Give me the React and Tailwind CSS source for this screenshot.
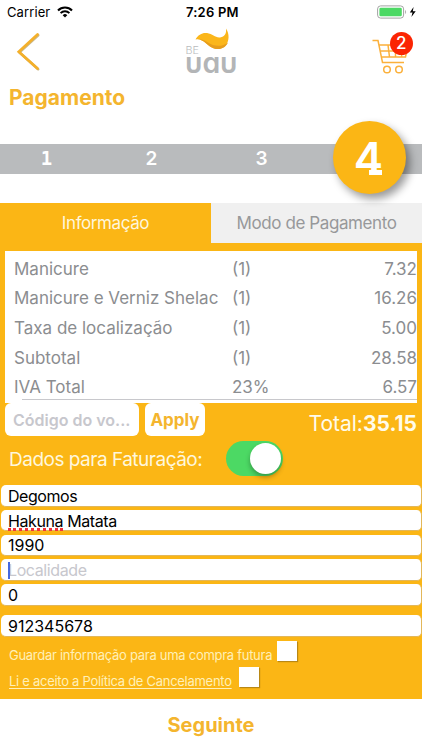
const items = [
  { name: 'Manicure', qty: '(1)', price: '7.32' },
  { name: 'Manicure e Verniz Shelac', qty: '(1)', price: '16.26' },
  { name: 'Taxa de localização', qty: '(1)', price: '5.00' },
  { name: 'Subtotal', qty: '(1)', price: '28.58' },
  { name: 'IVA Total', qty: '23%', price: '6.57' },
];

function StatusBar() {
  return (
    <div className="relative flex h-6 items-center justify-between pl-[7px] pr-[6px] text-[13px] text-black">
      <div className="flex items-center gap-[7px]">
        <span className="mt-px tracking-[0.1px]">Carrier</span>
        <svg className="h-[12px] w-[16px]" viewBox="0 0 16 12" fill="none" stroke="black">
          <path d="M1 4.4a10 10 0 0 1 14 0" strokeWidth="2.1" />
          <path d="M3.6 7.1a6.2 6.2 0 0 1 8.8 0" strokeWidth="2" />
          <path d="M8 11.6 5.7 9.2a3.3 3.3 0 0 1 4.6 0Z" fill="black" stroke="none" />
        </svg>
      </div>
      <span className="absolute left-[186px] mt-px tracking-[0.2px] font-semibold">7:26 PM</span>
      <svg className="h-[14px] w-[39px]" viewBox="0 0 39 14">
        <rect x="0.6" y="0.9" width="26" height="12.2" rx="3" fill="white" stroke="#a3a3a3" strokeWidth="1" />
        <rect x="2.4" y="2.7" width="22.4" height="8.6" rx="1.4" fill="#4cd964" />
        <path d="M28.2 5v4c1.2-.4 1.2-3.6 0-4Z" fill="#a3a3a3" />
        <path d="M36.6 2 32.8 7.6h2.7L34.4 12l4.3-5.8h-2.9Z" fill="black" />
      </svg>
    </div>
  );
}

function Logo() {
  return (
    <div className="relative h-[50px] w-[56px]">
      <svg className="h-[50px] w-[56px] overflow-visible" viewBox="0 0 56 50">
        <path d="M9.5 12.5C12 7.500 17 5.300 21 6.100c6 1.200 9 5.400 14 4.100 4.500-1.200 5.500-4.700 5-8.700 3.500 5 3.500 12.500-.5 17-4 4.300-10.500 4.500-15.500 1C19 15.500 15 11 9.500 12.500Z" fill="#fbb61a" />
        <path d="M9.500 12.500c5.500-.8 8.500.5 12 2.700 6 4 14 5.500 20.500.3-3 7-11.500 8.500-18 4C19 15.500 15 11 9.500 12.500Z" fill="#e79d1c" />
        <text x="-0.500" y="27" fontSize="10" fontWeight="300" fill="#b9bbbd" textLength="13.500" lengthAdjust="spacingAndGlyphs">BE</text>
      </svg>
      <span className="absolute left-[-1.500px] top-[24px] origin-left scale-x-[0.98] text-[29px] font-semibold leading-[24px] text-[#b3b5b7] [font-feature-settings:'cv11','cv06']">
        uau
      </span>
    </div>
  );
}

function Cart() {
  return (
    <div className="relative h-[36px] w-[42px]">
      <svg className="h-[36px] w-[42px]" viewBox="0 0 42 36" fill="none" stroke="#fbb03b" strokeWidth="1.500">
        <path d="M0.500 2.500H6l4.500 22h21.500M7 7h29l-2.500 12H9.500M8.500 13h26M16 7l1.500 12M23.500 7v12M30.500 7 29.500 19" />
        <circle cx="15" cy="31.500" r="3.300" />
        <circle cx="27" cy="31.500" r="3.300" />
      </svg>
      <span className="absolute left-[18px] top-[-6px] flex h-[22.500px] w-[22.500px] items-center justify-center rounded-full bg-[#fb2503] text-[17px] font-medium text-white">
        2
      </span>
    </div>
  );
}

function Field({ className = '', children }) {
  return (
    <div className={`flex h-[21.5px] items-center rounded-[5px] border-b border-r border-[#e2b75a] bg-white pl-[7px] pt-px text-[16px] leading-none ${className}`}>
      {children}
    </div>
  );
}

export default function App() {
  return (
    <div className="flex h-[750px] w-[422px] flex-col overflow-hidden bg-white font-[Inter,sans-serif]">
      <StatusBar />

      {/* Header */}
      <div className="flex h-[119.5px] flex-col">
        <div className="flex items-start justify-between pl-[16px] pr-[8px]">
          <svg className="mt-[8px] h-[40px] w-[26px]" viewBox="0 0 26 40" fill="none" strokeLinecap="round">
            <path d="M21.500 2.500 2.800 19.700 21.500 36.500" stroke="#c9b78a" strokeWidth="2.600" transform="translate(0.700 0.700)" />
            <path d="M21.500 2.500 2.800 19.700 21.500 36.500" stroke="#f4b02a" strokeWidth="2.700" />
          </svg>
          <div className="ml-[14px] mt-[3px] w-[56px]">
            <Logo />
          </div>
          <div className="mt-[14px]">
            <Cart />
          </div>
        </div>
        <h1 className="ml-[9px] mt-[8px] text-[21px] font-bold leading-[26px] text-[#f4b52e]">Pagamento</h1>
      </div>

      {/* Steps */}
      <div className="relative h-[59px]">
        <div className="grid h-[30px] grid-cols-[93px_117px_103px_109px] items-center bg-[#b9bbbd] text-center text-[19px] font-semibold leading-none text-white">
          <span className="font-['DejaVu_Sans_Mono',monospace] font-bold">1</span>
          <span>2</span>
          <span>3</span>
        </div>
        <div className="absolute left-[333px] top-[-22.500px] flex h-[73px] w-[73px] items-center justify-center rounded-full bg-[#fbb615] text-[44px] font-semibold leading-none text-white shadow-[4px_5px_8px_rgba(0,0,0,0.4)]">
          <span className="relative -left-[1px]">
            4
            {/* slab under the stem */}
            <span className="absolute bottom-[5px] right-[1px] h-[5px] w-[13px] bg-white"></span>
          </span>
        </div>
      </div>

      <div className="flex h-[496px] flex-col bg-[#fbb615]">
        {/* Tabs */}
        <div className="grid h-[39.5px] shrink-0 grid-cols-2 text-center text-[17px] leading-[40px] tracking-[-0.4px]">
          <div className="text-[#fff7dc]">Informação</div>
          <div className="bg-[#f0f0f0] text-[#97989a]">Modo de Pagamento</div>
        </div>

        {/* Items */}
        <div className="mx-[5px] mt-[8.500px] h-[152px] shrink-0 bg-white pt-[4px] text-[17px] text-[#8b8d90]">
          {items.map((item) => (
            <div key={item.name} className="grid h-[29.700px] grid-cols-[218px_1fr_auto] items-center pl-[9px]">
              <span className="whitespace-nowrap">{item.name}</span>
              <span>{item.qty}</span>
              <span>{item.price}</span>
            </div>
          ))}
          <div className="-mt-[4px] ml-[17px] border-t border-[#c8c8cc]"></div>
        </div>

        {/* Voucher */}
        <div className="flex h-[34px] shrink-0 items-center px-[5px]">
          <div className="flex h-[33px] w-[134px] items-center rounded-[6px] bg-white pl-[8px] text-[16px] font-semibold text-[#c7c7cd]">Código do vo...</div>
          <button className="ml-[6px] h-[33px] w-[60px] rounded-[6px] bg-white pt-[2px] text-[17px] font-bold text-[#f4b52e]">Apply</button>
          <div className="ml-auto pt-[9px] text-[21px] text-[#fffbea]">
            Total:<span className="font-bold">35.15</span>
          </div>
        </div>

        {/* Billing */}
        <div className="flex h-[46px] shrink-0 items-center pl-[9px]">
          <span className="w-[217px] pt-[2px] text-[19px] tracking-[-0.5px] text-[#fff7dc]">Dados para Faturação:</span>
          <div className="mb-[3px] flex h-[35px] w-[57px] items-center justify-end rounded-full bg-[#4cd964] pr-[2px]">
            <div className="h-[31px] w-[31px] rounded-full bg-white shadow-[0_3px_5px_rgba(0,0,0,0.3)]"></div>
          </div>
        </div>

        <div className="ml-px flex shrink-0 flex-col gap-[3.250px] pt-[2.500px]">
          <Field className="tracking-[-0.45px]">Degomos</Field>
          <Field className="tracking-[-0.4px]">
            <span className="relative">
              Hakuna
              <span className="absolute -bottom-[2px] left-0 w-full border-b-[3px] border-dotted border-[#f0343c]"></span>
            </span>
            <span className="ml-[4px]">Matata</span>
          </Field>
          <Field>1990</Field>
          <Field className="relative tracking-[-0.4px]">
            <span className="absolute left-[7px] h-[17px] w-[2px] bg-[#4569e0]"></span>
            <span className="text-[#c7c7cd]">Localidade</span>
          </Field>
          <Field>0</Field>
          <Field className="mt-[6.500px]">912345678</Field>
        </div>

        {/* Options */}
        <div className="mt-[4px] flex flex-col gap-[5.500px] pl-[9px] text-[13px] leading-none tracking-[-0.28px] text-[#fff0b8]">
          <div className="flex h-[20.500px] items-center">
            <span className="w-[268px] whitespace-nowrap pt-[9px]">Guardar informação para uma compra futura</span>
            <span className="h-[20px] w-[20px] bg-white shadow-[1px_1px_1px_rgba(120,90,20,0.5)]"></span>
          </div>
          <div className="flex h-[20.500px] items-center">
            <span className="w-[230px] whitespace-nowrap pt-[9px] underline underline-offset-2">Li e aceito a Política de Cancelamento</span>
            <span className="h-[20px] w-[20px] bg-white shadow-[1px_1px_1px_rgba(120,90,20,0.5)]"></span>
          </div>
        </div>
      </div>

      <button className="flex-1 pt-[2px] text-[20px] font-bold text-[#f4b52e]">Seguinte</button>
    </div>
  );
}
